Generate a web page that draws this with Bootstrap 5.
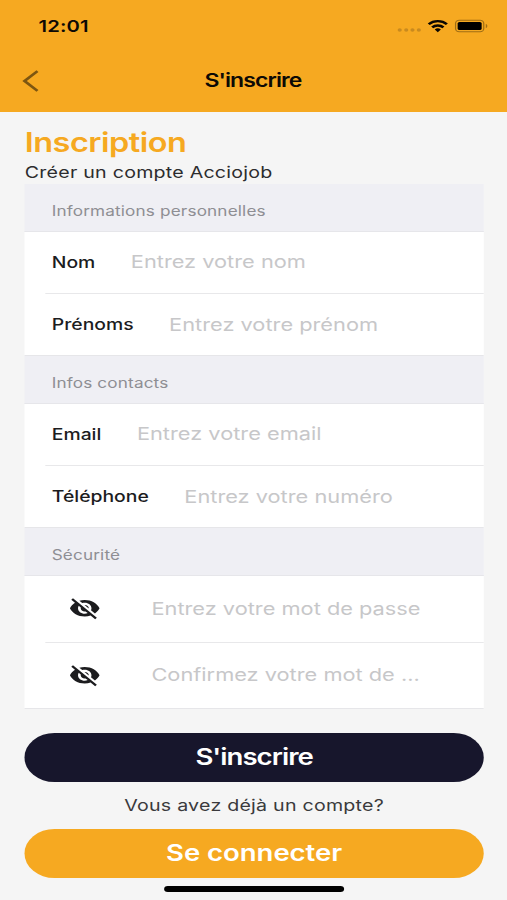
<!DOCTYPE html>
<html lang="fr">
<head>
<meta charset="utf-8">
<meta name="viewport" content="width=device-width, initial-scale=1">
<title>S'inscrire</title>
<link href="https://cdn.jsdelivr.net/npm/bootstrap@5.3.0/dist/css/bootstrap.min.css" rel="stylesheet">
<style>
  body { background: #f5f5f5; font-family: Inter, "Liberation Sans", sans-serif; color: #1c1c1e; overflow: hidden; }
  .phone { width: 414px; height: 900px; transform: scaleX(1.22464); transform-origin: 0 0; }
  .topbar { background: #f6a921; height: 111.5px; color: #0d0a05; }
  .statusbar { height: 52px; padding: 0 15.5px 0 31.5px; }
  .clock { font-size: 16.5px; font-weight: 600; line-height: 1; letter-spacing: .1px; }
  .navrow { height: 57px; padding: 0 18px; }
  .navtitle { font-size: 18.8px; font-weight: 600; line-height: 1; letter-spacing: -.75px; padding-top: 2px; margin-left: -1px; }
  .navside { width: 14px; }
  .content { padding: 0 19.2px 0 20.2px; }
  .headline { color: #f6a921; font-size: 26.5px; font-weight: 600; line-height: 32px; padding-top: 14.5px; letter-spacing: -.4px; }
  .subline { font-size: 16px; line-height: 24px; padding-top: 2px; letter-spacing: .2px; color: #2c2c2e; }
  .grouphead { background: #efeff4; color: #8e8e93; height: 47.5px; padding: 6px 0 0 22px; font-size: 14px; letter-spacing: .13px; border-bottom: 1px solid #e6e6ea; }
  .fields { background: #fff; padding-left: 16.5px; border-bottom: 1px solid #e6e6e9; }
  .field { height: 61.75px; padding-left: 5.6px; }
  .field + .field { border-top: 1px solid #e8e8ea; }
  .field label { font-size: 15.8px; font-weight: 500; margin-right: 29px; }
  .field .form-control { font-size: 17.8px; border: 0; border-radius: 0; padding: 0; background: none; line-height: 28px; }
  .field .form-control::placeholder { color: #c7c7c9; opacity: 1; }
  .pass .field { height: 66.25px; padding-left: 18.9px; }
  .eye { width: 26.4px; height: 26.4px; margin-right: 41.7px; flex: none; }
  .pill { height: 48.5px; border-radius: 25px; border: 0; font-size: 22.5px; font-weight: 600; color: #fff; padding: 0; }
  .pill-dark { background: #17162c; letter-spacing: -.8px; }
  .pill-gold { background: #f6a921; letter-spacing: -.05px; }
  .question { font-size: 16px; line-height: 47.5px; letter-spacing: .2px; color: #3a3a3c; }
  .homebar { width: 147px; height: 6px; border-radius: 3px; background: #000; margin-top: 8px; }
</style>
</head>
<body>
<div class="phone">
  <header class="topbar">
    <div class="statusbar d-flex align-items-center justify-content-between">
      <span class="clock">12:01</span>
      <svg width="75" height="14" viewBox="0 0 75 14">
        <g fill="#c98a1e"><circle cx="2.4" cy="11" r="1.7"/><circle cx="7.7" cy="11" r="1.7"/><circle cx="12.8" cy="11" r="1.7"/><circle cx="18" cy="11" r="1.7"/></g>
        <g fill="none" stroke="#0a0702" stroke-width="2.3">
          <path d="M26.1 5.3a10.4 10.4 0 0 1 14.8 0"/>
          <path d="M28.9 8.4a6.5 6.5 0 0 1 9.2 0"/>
        </g>
        <path d="M33.5 13.2l-2.5-2.7a3.6 3.6 0 0 1 5 0z" fill="#0a0702"/>
        <rect x="48" y="1.2" width="23" height="11.6" rx="3" fill="none" stroke="#a06e15"/>
        <rect x="49.7" y="2.9" width="19.6" height="8.2" rx="1.5" fill="#000"/>
        <path d="M72.7 5v4c1.7-.7 1.7-3.3 0-4z" fill="#a06e15"/>
      </svg>
    </div>
    <div class="navrow d-flex align-items-center justify-content-between">
      <svg class="navside" height="22" viewBox="0 0 14 22" fill="none" stroke="#7d5611" stroke-width="2.4"><path d="M12.6 1.2L2 11l10.600 9.800"/></svg>
      <span class="navtitle">S'inscrire</span>
      <span class="navside"></span>
    </div>
  </header>
  <main class="content">
    <h1 class="headline mb-0">Inscription</h1>
    <div class="subline">Créer un compte Acciojob</div>
    <form>
      <div class="grouphead d-flex align-items-center">Informations personnelles</div>
      <div class="fields">
        <div class="field d-flex align-items-center"><label for="nom">Nom</label><input id="nom" class="form-control" placeholder="Entrez votre nom"></div>
        <div class="field d-flex align-items-center"><label for="prenoms">Prénoms</label><input id="prenoms" class="form-control" placeholder="Entrez votre prénom"></div>
      </div>
      <div class="grouphead d-flex align-items-center">Infos contacts</div>
      <div class="fields">
        <div class="field d-flex align-items-center"><label for="email">Email</label><input id="email" class="form-control" placeholder="Entrez votre email"></div>
        <div class="field d-flex align-items-center"><label for="tel">Téléphone</label><input id="tel" class="form-control" placeholder="Entrez votre numéro"></div>
      </div>
      <div class="grouphead d-flex align-items-center">Sécurité</div>
      <div class="fields pass">
        <div class="field d-flex align-items-center">
          <svg class="eye" viewBox="0 0 24 24" fill="#1c1c1e"><path id="eyeoff" d="M12 7c2.760 0 5 2.240 5 5 0 .65-.13 1.260-.36 1.830l2.920 2.920c1.510-1.260 2.700-2.890 3.430-4.750-1.730-4.390-6-7.500-11-7.500-1.400 0-2.740.25-3.980.7l2.160 2.160C10.740 7.130 11.350 7 12 7zM2 4.270l2.280 2.280.46.46C3.080 8.300 1.780 10.020 1 12c1.730 4.390 6 7.500 11 7.500 1.550 0 3.030-.3 4.380-.84l.42.42L19.730 22 21 20.730 3.270 3 2 4.270zM7.530 9.800l1.550 1.550c-.05.21-.08.43-.08.65 0 1.660 1.340 3 3 3 .22 0 .44-.03.65-.08l1.550 1.550c-.67.33-1.410.53-2.200.53-2.760 0-5-2.240-5-5 0-.79.2-1.530.53-2.200zm4.310-.78l3.150 3.150.02-.16c0-1.660-1.340-3-3-3l-.17.01z"/></svg>
          <input class="form-control" placeholder="Entrez votre mot de passe">
        </div>
        <div class="field d-flex align-items-center">
          <svg class="eye" viewBox="0 0 24 24" fill="#1c1c1e"><use href="#eyeoff"/></svg>
          <input class="form-control" placeholder="Confirmez votre mot de ...">
        </div>
      </div>
      <button type="button" class="btn pill pill-dark w-100 mt-4">S'inscrire</button>
      <div class="question text-center">Vous avez déjà un compte?</div>
      <button type="button" class="btn pill pill-gold w-100">Se connecter</button>
    </form>
    <div class="homebar mx-auto"></div>
  </main>
</div>
<script src="https://cdn.jsdelivr.net/npm/bootstrap@5.3.0/dist/js/bootstrap.bundle.min.js"></script>
</body>
</html>
